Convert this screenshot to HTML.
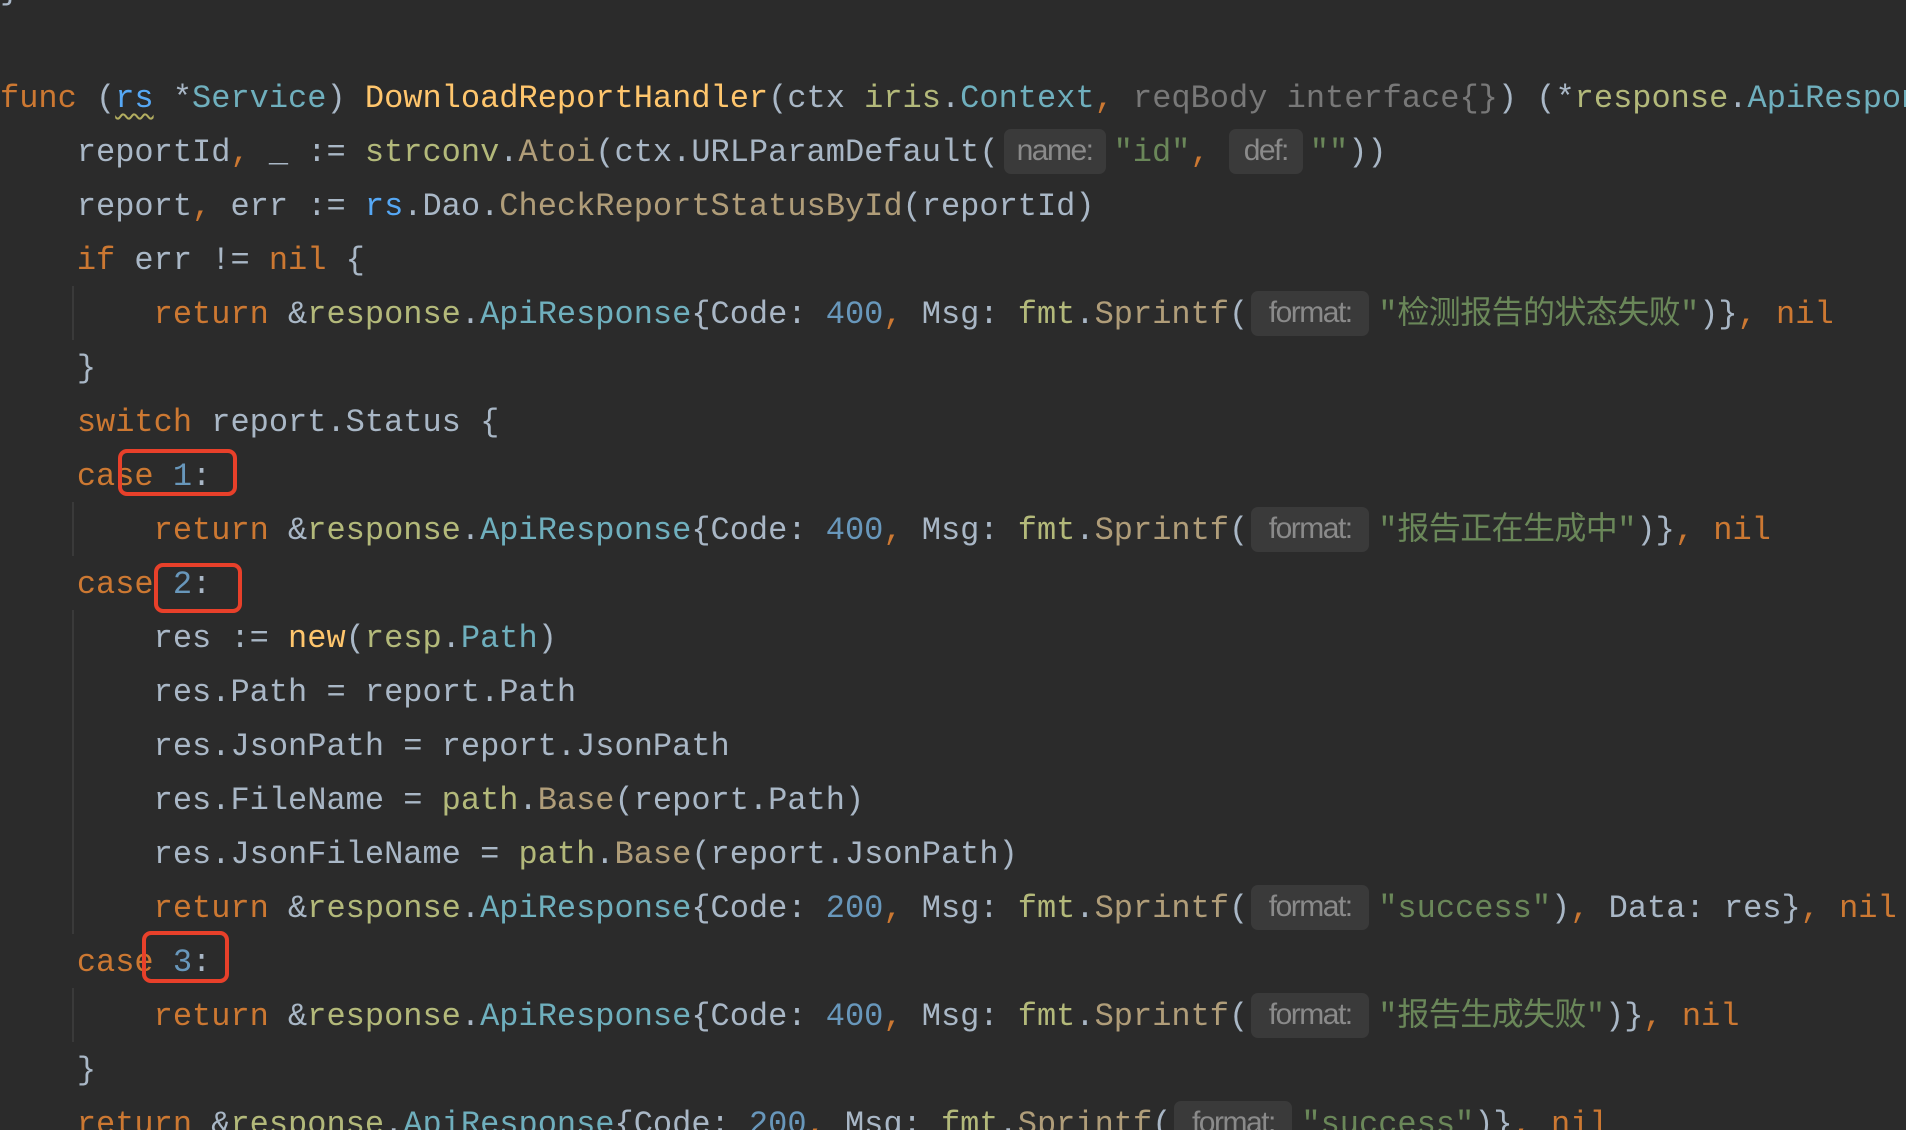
<!DOCTYPE html>
<html><head><meta charset="utf-8"><style>
html,body{margin:0;padding:0;background:#2b2b2b;width:1906px;height:1130px;overflow:hidden;position:relative}
pre{position:absolute;left:0;top:-36px;margin:0;font-family:"Liberation Mono","Noto Sans CJK SC",monospace;font-size:32px;line-height:54px;color:#a9b7c6;white-space:pre}
.k{color:#cc7832}.o{color:#cc7832}.f{color:#ffc66d}.t{color:#6fafbd}.p{color:#b3b97a}.c{color:#b09d79}.v{color:#56a8f5}.n{color:#6897bb}.s{color:#6a8759}.g{color:#787878}
.cj{letter-spacing:-0.6px}
.w{text-decoration:underline wavy #b3ae60;text-decoration-thickness:2px;text-underline-offset:6px}
.h{display:inline-block;height:45px;line-height:43px;vertical-align:top;position:relative;top:3px;background:#3a3a3a;border-radius:7px;color:#8a8a8a;font-family:"Liberation Sans",sans-serif;font-size:30px;text-align:center;letter-spacing:-1.5px}
.fm{width:118px;margin:0 9px 0 3px}
.nm{width:102px;margin:0 8px 0 5px}
.df{width:74px;margin:0 7px 0 0}
.gd{position:absolute;left:72px;width:2px;background:#3a3a3a}
.rb{position:absolute;border:4px solid #e8402a;border-radius:9px;box-sizing:border-box}
</style></head><body>
<div class="gd" style="top:286px;height:54px"></div>
<div class="gd" style="top:502px;height:54px"></div>
<div class="gd" style="top:610px;height:324px"></div>
<div class="gd" style="top:988px;height:54px"></div>
<pre>}

<span class="k">func</span> (<span class="v w">rs</span> *<span class="t">Service</span>) <span class="f">DownloadReportHandler</span>(ctx <span class="p">iris</span>.<span class="t">Context</span><span class="o">,</span> <span class="g">reqBody interface{}</span>) (*<span class="p">response</span>.<span class="t">ApiResponse</span>
    reportId<span class="o">,</span> _ := <span class="p">strconv</span>.<span class="c">Atoi</span>(ctx.URLParamDefault(<span class="h nm">name:</span><span class="s">"id"</span><span class="o">,</span> <span class="h df">def:</span><span class="s">""</span>))
    report<span class="o">,</span> err := <span class="v">rs</span>.Dao.<span class="c">CheckReportStatusById</span>(reportId)
    <span class="k">if</span> err != <span class="k">nil</span> {
        <span class="k">return</span> &amp;<span class="p">response</span>.<span class="t">ApiResponse</span>{Code: <span class="n">400</span><span class="o">,</span> Msg: <span class="p">fmt</span>.<span class="c">Sprintf</span>(<span class="h fm">format:</span><span class="s">"<span class="cj">检测报告的状态失败</span>"</span>)}<span class="o">,</span> <span class="k">nil</span>
    }
    <span class="k">switch</span> report.Status {
    <span class="k">case</span> <span class="n">1</span>:
        <span class="k">return</span> &amp;<span class="p">response</span>.<span class="t">ApiResponse</span>{Code: <span class="n">400</span><span class="o">,</span> Msg: <span class="p">fmt</span>.<span class="c">Sprintf</span>(<span class="h fm">format:</span><span class="s">"<span class="cj">报告正在生成中</span>"</span>)}<span class="o">,</span> <span class="k">nil</span>
    <span class="k">case</span> <span class="n">2</span>:
        res := <span class="f">new</span>(<span class="p">resp</span>.<span class="t">Path</span>)
        res.Path = report.Path
        res.JsonPath = report.JsonPath
        res.FileName = <span class="p">path</span>.<span class="c">Base</span>(report.Path)
        res.JsonFileName = <span class="p">path</span>.<span class="c">Base</span>(report.JsonPath)
        <span class="k">return</span> &amp;<span class="p">response</span>.<span class="t">ApiResponse</span>{Code: <span class="n">200</span><span class="o">,</span> Msg: <span class="p">fmt</span>.<span class="c">Sprintf</span>(<span class="h fm">format:</span><span class="s">"success"</span>)<span class="o">,</span> Data: res}<span class="o">,</span> <span class="k">nil</span>
    <span class="k">case</span> <span class="n">3</span>:
        <span class="k">return</span> &amp;<span class="p">response</span>.<span class="t">ApiResponse</span>{Code: <span class="n">400</span><span class="o">,</span> Msg: <span class="p">fmt</span>.<span class="c">Sprintf</span>(<span class="h fm">format:</span><span class="s">"<span class="cj">报告生成失败</span>"</span>)}<span class="o">,</span> <span class="k">nil</span>
    }
    <span class="k">return</span> &amp;<span class="p">response</span>.<span class="t">ApiResponse</span>{Code: <span class="n">200</span><span class="o">,</span> Msg: <span class="p">fmt</span>.<span class="c">Sprintf</span>(<span class="h fm">format:</span><span class="s">"success"</span>)}<span class="o">,</span> <span class="k">nil</span>
</pre>
<div class="rb" style="left:118px;top:449px;width:119px;height:47px"></div>
<div class="rb" style="left:154px;top:563px;width:88px;height:50px"></div>
<div class="rb" style="left:142px;top:931px;width:87px;height:52px"></div>
</body></html>
